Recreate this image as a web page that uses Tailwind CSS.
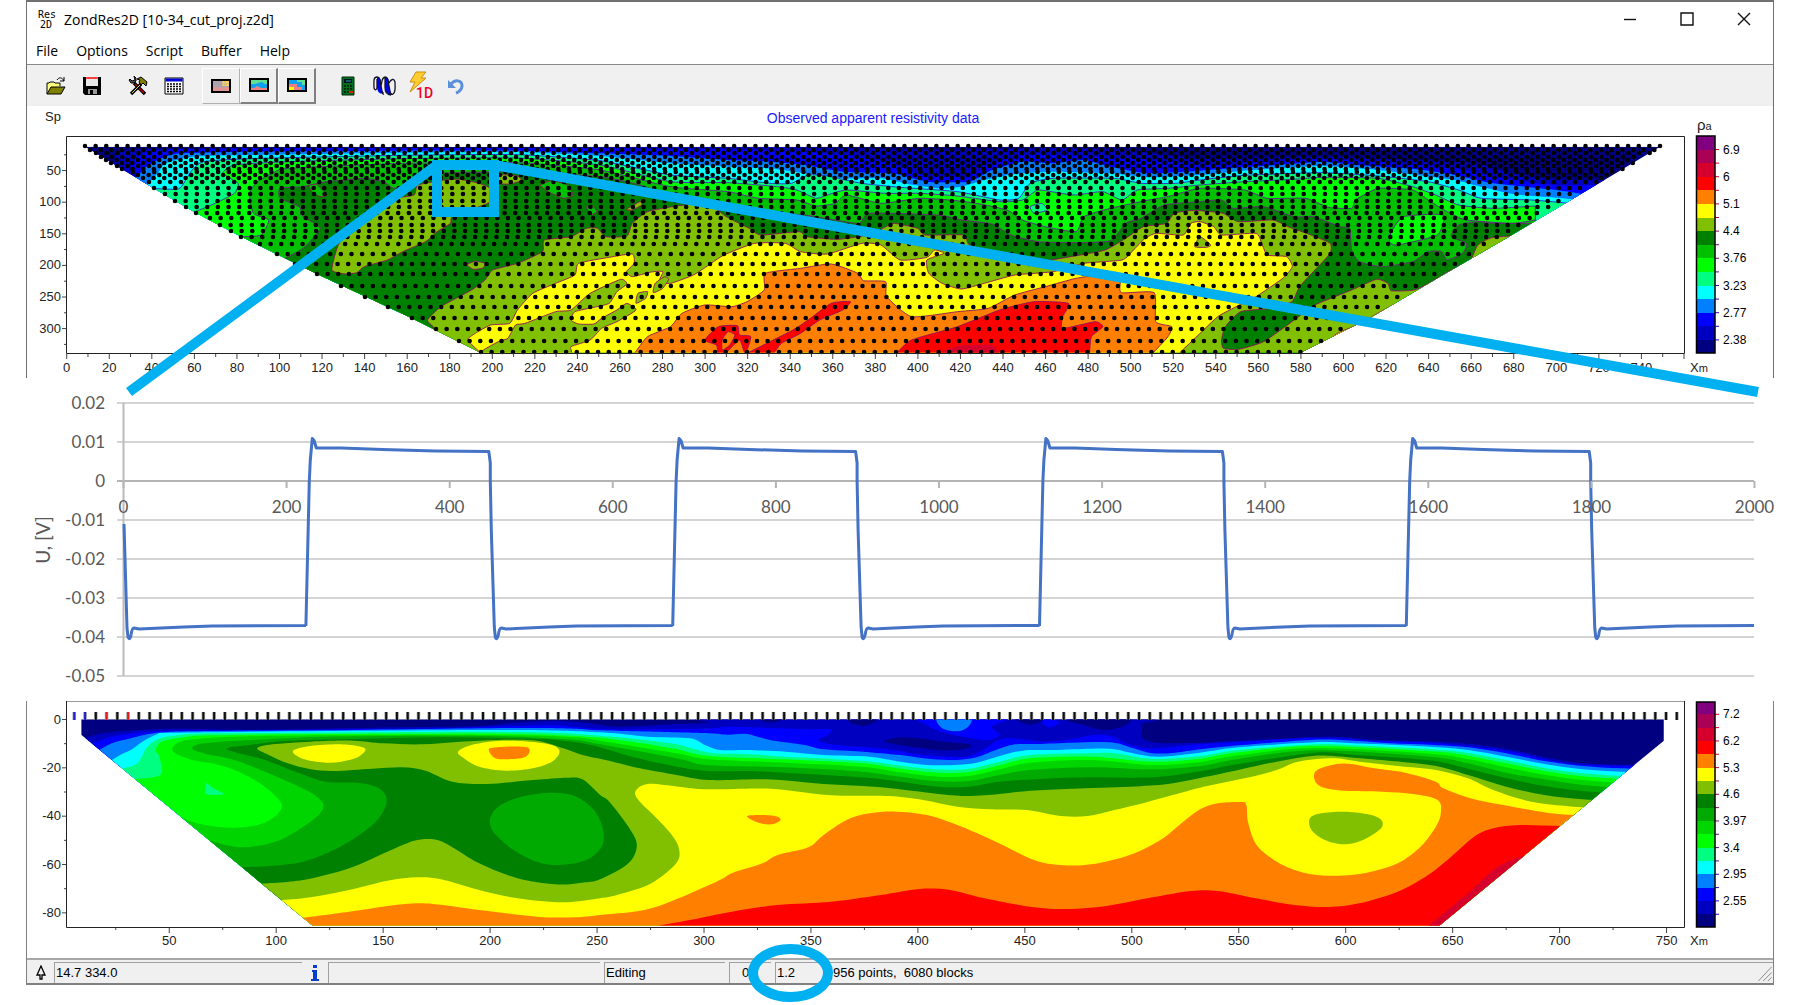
<!DOCTYPE html>
<html lang="en">
<head>
  <meta charset="UTF-8" />
  <meta name="viewport" content="width=device-width, initial-scale=1.0"/>
  <title>ZondRes2D [10-34_cut_proj.z2d]</title>
  <script src="https://cdn.jsdelivr.net/npm/@tailwindcss/browser@4"></script>
</head>
<body class="bg-white text-black">
<div class="relative overflow-hidden pb-5">

  <!-- Window top: title, menu, toolbar, observed data -->
  <div class="mx-[26px] border-x border-t-2 border-[#707070]">
    <header class="flex h-[34px] items-center pl-[11px] font-['Open_Sans',sans-serif]">
      <svg class="h-5 w-5 shrink-0" viewBox="0 0 20 20" font-family="DejaVu Sans Mono, monospace" font-size="10">
        <text x="0" y="9">Res</text><text x="2" y="19">2D</text>
      </svg>
      <h1 class="ml-[6px] text-[14px]">ZondRes2D [10-34_cut_proj.z2d]</h1>
      <div class="ml-auto flex pr-px">
        <button class="flex h-8 w-[57px] items-center justify-center" aria-label="Minimize"><svg class="h-[14px] w-[14px]" viewBox="0 0 14 14" stroke="#111" stroke-width="1.4"><path d="M1 7.5h12"/></svg></button>
        <button class="flex h-8 w-[57px] items-center justify-center" aria-label="Maximize"><svg class="h-[14px] w-[14px]" viewBox="0 0 14 14" fill="none" stroke="#111" stroke-width="1.4"><path d="M1 1h12v12h-12z"/></svg></button>
        <button class="flex h-8 w-[57px] items-center justify-center" aria-label="Close"><svg class="h-[14px] w-[14px]" viewBox="0 0 14 14" stroke="#111" stroke-width="1.4"><path d="M1 1l12 12M13 1l-12 12"/></svg></button>
      </div>
    </header>
    <nav class="flex h-[29px] items-center gap-[18px] border-b border-[#8a8a8a] pl-[9px] font-['Open_Sans',sans-serif] text-[14px]">
      <button>File</button>
      <button>Options</button>
      <button>Script</button>
      <button>Buffer</button>
      <button>Help</button>
    </nav>

    <!-- Toolbar -->
    <div class="flex h-[41px] items-center bg-[#f0f0f0] pl-[11px]">
      <button class="flex h-9 w-9 items-center justify-center" aria-label="Open">
        <svg class="h-5 w-5" viewBox="0 0 20 20"><path d="M1 18V7h2l1-1h4l1 1h5v3" fill="#ffff80" stroke="#000"/><path d="M1 18l4-7h14l-4 7z" fill="#808000" stroke="#000"/><path d="M11 4c2-3 5-3 7 1M18 1v4h-4" fill="none" stroke="#000"/></svg>
      </button>
      <button class="flex h-9 w-9 items-center justify-center" aria-label="Save">
        <svg class="h-5 w-5" viewBox="0 0 20 20"><path d="M1 1h18v18H3l-2-2z" fill="#000"/><path d="M4 2h12v8H4z" fill="#e8e8e8"/><path d="M4 1h12v2H4z" fill="#ff4040"/><path d="M6 13h9v5H6z" fill="#999"/><path d="M8 14h3v4H8z" fill="#000"/></svg>
      </button>
      <span class="w-[10px]"></span>
      <button class="flex h-9 w-9 items-center justify-center" aria-label="Settings">
        <svg class="h-5 w-5" viewBox="0 0 20 20"><path d="M6 7l11 11" stroke="#000" stroke-width="3.4"/><path d="M7 8l9 9" stroke="#c00000" stroke-width="1.4"/><path d="M13 8L3 18" stroke="#000" stroke-width="3.4"/><path d="M12 9l-8 8" stroke="#e0d040"/><path d="M1 4l2 3h3l2-2V2L6 0l1 4-3 1-2-2z" fill="#555" stroke="#000"/><path d="M9 3l4-2 6 5-1 4-3-3-2 2-2-3 1-2z" fill="#808000" stroke="#000"/></svg>
      </button>
      <button class="flex h-9 w-9 items-center justify-center" aria-label="Table">
        <svg class="h-5 w-5" viewBox="0 0 20 20"><path d="M1 2h18v16H1z" fill="#fff" stroke="#000"/><path d="M1.500 2.500h17v3h-17z" fill="#0000d0"/><path d="M3 8h14M3 10.500h14M3 13h14M3 15.500h14" stroke="#000" stroke-width="1.500" stroke-dasharray="2 1"/></svg>
      </button>
      <span class="w-[10px]"></span>
      <button class="flex h-9 w-[38px] items-center justify-center border border-t-white border-l-white border-r-[#b0b0b0] border-b-[#b0b0b0]" aria-label="Cells">
        <svg class="h-[14px] w-5" viewBox="0 0 20 14"><path d="M1 1h18v12H1z" fill="#b0a0b0"/><path d="M11 2h7v5h-7z" fill="#ffd060"/><path d="M2 8h16v4H2z" fill="#f09090"/><path d="M5 2v10M8 2v10M11 2v10M14 2v10M2 5h16M2 8h16" stroke="#aaa" stroke-width=".6"/><path d="M1 1h18v12H1z" fill="none" stroke="#000" stroke-width="2"/></svg>
      </button>
      <button class="flex h-9 w-[38px] items-center justify-center border-t border-l border-r-2 border-b-2 border-t-white border-l-white border-r-[#808080] border-b-[#808080]" aria-label="Section">
        <svg class="h-[14px] w-5" viewBox="0 0 20 14"><path d="M1 1h18v12H1z" fill="#10a0f0"/><path d="M1 1h18v5h-3l-3-2-4 1-3 1H1z" fill="#60e090"/><path d="M1 10h4l3-2 4 2h7v3H1z" fill="#f08080"/><path d="M1 1h18v12H1z" fill="none" stroke="#000" stroke-width="2"/></svg>
      </button>
      <button class="flex h-9 w-[38px] items-center justify-center border-t border-l border-r-2 border-b-2 border-t-white border-l-white border-r-[#808080] border-b-[#808080]" aria-label="Model">
        <svg class="h-[14px] w-5" viewBox="0 0 20 14"><path d="M1 1h18v12H1z" fill="#10a0f0"/><path d="M10 1h9v6h-4V4h-5z" fill="#60e090"/><path d="M1 6h9v3h5v4H1z" fill="#f08080"/><path d="M1 9h6v4H1z" fill="#ff0"/><path d="M1 1h18v12H1z" fill="none" stroke="#000" stroke-width="2"/></svg>
      </button>
      <span class="w-[14px]"></span>
      <button class="flex h-9 w-9 items-center justify-center" aria-label="Calculate">
        <svg class="h-5 w-5" viewBox="0 0 20 20"><path d="M4 1h12v18H4z" fill="#007020" stroke="#002808"/><path d="M6 3h8v4H6z" fill="#012"/><path d="M8 5h5" stroke="#2aa"/><path d="M6 10h9M6 13h9M6 16h5" stroke="#001800" stroke-width="1.500" stroke-dasharray="2 1"/><path d="M11 16h4" stroke="#d02000" stroke-width="2"/></svg>
      </button>
      <button class="flex h-9 w-9 items-center justify-center" aria-label="Inversion">
        <svg class="h-5 w-6" viewBox="0 0 24 20"><path d="M5 1c4 0 4 4 4 8s1 6 3 8c-4 2-7-1-7-7z" fill="#0000f0"/><path d="M13 1c4 0 4 4 4 8s1 7 3 9c-4 2-7-2-7-8z" fill="#0000f0"/><path d="M5 1C1 1 2 6 2 12c1 3 3 2 3-1V3M5 1c4 0 3 5 4 9s1 9 3 8M13 1C9 2 10 8 9 10M13 1c4 0 3 5 4 9s1 10 4 8 2-6 2-12c-1-4-4-3-6 1M13 2v9c0 5 2 8 6 8" fill="none" stroke="#112" stroke-width="1.300"/></svg>
      </button>
      <button class="flex h-9 w-9 items-center justify-center" aria-label="1D inversion">
        <svg class="h-8 w-7" viewBox="0 0 28 32"><path d="M10 2h10l-5 6h5L4 22l5-10H4z" fill="#ffcc30" stroke="#c89010"/><text x="10" y="28" font-family="Roboto, sans-serif" font-size="14" font-weight="500" fill="#f00020">1D</text></svg>
      </button>
      <button class="flex h-9 w-9 items-center justify-center" aria-label="Undo">
        <svg class="h-[18px] w-[18px]" viewBox="0 0 18 18"><path d="M4 7c4-5 11-4 11 2 0 3-3 6-6 7" fill="none" stroke="#5b90dc" stroke-width="3"/><path d="M1 3v8h8z" fill="#5b90dc"/></svg>
      </button>
    </div>

    <svg id="observed" class="block h-auto w-full" viewBox="27 106 1746 272" font-family="Liberation Sans, Arial, sans-serif" font-size="13">
      <defs><clipPath id="obsClip"><path d="M170 80L349 205L461 280L578 350L776 462L1024 595L1204 698H3347L3527 595L3722 463L3890 351L4050 242L4133 185L4286 80z"/></clipPath></defs>
      <text x="45" y="121" fill="#222">Sp</text>
      <text x="873" y="123" text-anchor="middle" font-size="14" fill="#1a1aff">Observed apparent resistivity data</text>
      <g transform="translate(20 120) scale(.38265 .33333)"><g id="obsMap" clip-path="url(#obsClip)"></g></g>
      <g id="obsDots" stroke="#000" stroke-width="4.6" stroke-linecap="round"></g>
      <g id="obsAxes"></g>
    </svg>
  </div>

  <!-- Measured signal -->
  <div class="mx-[26px] px-px">
    <svg id="signal" class="block h-auto w-full overflow-visible" viewBox="27 378 1746 323" font-family="Lato, Carlito, sans-serif" font-size="17" fill="#595959"></svg>
  </div>

  <!-- Window bottom: model section and status bar -->
  <div class="mx-[26px] border-x border-b-2 border-[#808080]">
    <svg id="model" class="block h-auto w-full" viewBox="27 701 1746 257" font-family="Liberation Sans, Arial, sans-serif" font-size="13">
      <defs><clipPath id="modClip"><path d="M160 88V134L765 707H3709L4296 152V88z"/></clipPath></defs>
      <g transform="translate(20 690) scale(.38265 .33333)"><g id="modMap" clip-path="url(#modClip)"></g></g>
      <g id="modAxes"></g>
    </svg>
    <footer class="flex h-[25px] items-stretch border-t-2 border-[#a8a8a8] bg-[#f0f0f0] pt-[2px] font-['Liberation_Sans',Arial,sans-serif] text-[13px] leading-[20px]">
      <span class="flex w-[27px] items-center justify-center"><svg class="h-4 w-3" viewBox="0 0 12 16" fill="none" stroke="#000" stroke-width="1.300"><path d="M6 1L2 10h3v4h2v-4h3z"/></svg></span>
      <span class="w-[248px] border-t border-l border-[#a0a0a0] pl-px">14.7 334.0</span>
      <span class="flex w-[26px] items-center justify-center"><svg class="h-4 w-2" viewBox="0 0 8 16" fill="#0a3cc8"><path d="M2 0h4v3H2zM1 5h5v9h2v2H0v-2h2V7H1z"/></svg></span>
      <span class="w-[272px] border-t border-l border-[#a0a0a0]"></span>
      <span class="ml-1 w-[121px] border-t border-l border-[#a0a0a0] pl-px">Editing</span>
      <span class="ml-1 w-[42px] border-t border-l border-[#a0a0a0] pl-3">0.</span>
      <span class="ml-1 w-[45px] border-t border-l border-[#a0a0a0] pl-px">1.2</span>
      <span class="ml-1 flex-1 border-t border-l border-[#a0a0a0] pl-2 whitespace-pre">956 points,  6080 blocks</span>
      <svg class="h-5 w-4 border-t border-[#a0a0a0]" viewBox="0 0 16 20" stroke="#888"><path d="M1 19L15 4M6 19l9-9M11 19l4-4"/></svg>
    </footer>
  </div>

  <!-- Callout over both panels -->
  <svg class="pointer-events-none absolute top-0 left-0 h-auto w-full" viewBox="0 0 1800 1005" fill="none" stroke="#00b0f0" stroke-width="10">
    <path d="M437 165h57v47h-57zM437 165L129 392M494 165L1758 392"/>
    <ellipse cx="790.500" cy="973" rx="37.500" ry="24"/>
  </svg>
</div>

<script>
  const byId = id => document.getElementById(id);

  // Catmull-Rom path through a flat [x, y, x, y, ...] list
  function curve(flat, closed, soft) {
    const p = [];
    for (let i = 0; i < flat.length; i += 2) p.push([flat[i], flat[i + 1]]);
    const n = p.length;
    const at = i => closed ? p[(i + n) % n] : p[Math.max(0, Math.min(n - 1, i))];
    let d = `M${p[0]}`;
    for (let i = 0; i < (closed ? n : n - 1); i++) {
      const a = at(i - 1), b = at(i), c = at(i + 1), e = at(i + 2);
      d += `C${b[0] + (c[0] - a[0]) * soft} ${b[1] + (c[1] - a[1]) * soft} ${c[0] - (e[0] - b[0]) * soft} ${c[1] - (e[1] - b[1]) * soft} ${c[0]} ${c[1]}`;
    }
    return d;
  }

  // "area" fills everything under the line, "blob" is a closed shape
  function paint(target, layers, soft, stroked) {
    let html = `<rect width="4400" height="740" fill="#000080"/>`;
    for (const [kind, color, pts, line] of layers) {
      let d = curve(pts, kind === "blob", soft);
      d += kind === "area" ? "V760H" + pts[0] + "z" : "z";
      const s = stroked && line !== 0 ? `stroke="${line || "#901060"}" stroke-width="2.5"` : "";
      html += `<path d="${d}" fill="${color}" ${s}/>`;
    }
    byId(target).innerHTML = html;
  }

  paint("obsMap", [
    ["area", "#0000c0", [240,140,250,110,300,88,700,84,1300,84,1900,80,2400,90,2700,84,2900,92,3084,115,3400,110,3600,118,3800,130,3900,160,4000,178,4150,180,4300,180], 0],
    ["area", "#0000ff", [310,172,290,130,330,98,400,88,700,84,1200,84,1568,86,1800,88,2050,95,2250,120,2360,165,2480,168,2540,130,2640,105,2900,115,3084,135,3200,130,3400,118,3600,130,3750,145,3850,170,4000,195,4150,196,4300,192], 0],
    ["area", "#0080ff", [290,190,330,140,370,115,420,100,600,95,1000,92,1300,92,1516,100,1700,108,1850,120,1960,125,2050,135,2150,155,2280,160,2370,185,2480,185,2540,150,2620,125,2700,130,2780,120,2850,140,2950,160,3084,152,3200,142,3400,126,3500,136,3650,148,3750,165,3850,190,4000,208,4100,225], 0],
    ["area", "#00ffff", [320,210,360,160,380,130,450,110,600,105,1000,98,1300,96,1516,108,1700,130,1850,140,1960,145,2050,160,2150,175,2250,175,2320,192,2400,205,2460,200,2520,180,2600,162,2700,155,2850,160,2950,172,3084,165,3200,152,3400,138,3550,150,3650,165,3750,180,3800,195,3900,222,4000,232,4080,240], 0],
    ["area", "#00ff80", [340,205,410,208,425,195,450,150,480,125,600,116,1000,106,1300,104,1516,122,1700,165,1850,175,1960,190,2016,190,2060,165,2110,168,2200,190,2300,202,2450,215,2560,240,2610,235,2640,190,2700,175,2860,175,2930,190,3020,190,3084,180,3200,166,3400,158,3550,168,3680,185,3760,210,3820,235,3950,240,4050,250], "#3020c0"],
    ["area", "#00ff00", [440,284,510,250,560,220,570,190,530,160,560,135,700,125,1000,116,1300,114,1516,135,1700,185,1850,188,1980,200,2030,210,2080,235,2110,225,2160,210,2260,220,2350,220,2450,228,2560,245,2620,240,2660,210,2720,220,2760,225,2830,215,2880,240,2920,210,3000,205,3084,195,3200,185,3330,178,3400,172,3550,175,3640,200,3700,225,3760,255,3850,265,3960,258], "#5020b0"],
    ["blob", "#00ff80", [2640,260,2670,250,2685,270,2650,280], "#5020b0"],
    ["area", "#00c000", [520,342,580,350,630,345,650,300,610,280,600,220,620,185,660,160,700,145,1000,130,1300,128,1516,150,1700,200,1850,215,1930,235,2030,240,2080,258,2130,250,2160,225,2250,250,2350,235,2430,240,2500,250,2580,270,2620,300,2680,320,2760,335,2780,290,2850,265,2950,240,3000,230,3084,205,3200,210,3260,235,3360,235,3420,262,3480,265,3490,240,3550,205,3640,210,3680,240,3730,275,3780,300,3900,310,3960,300], "#602090"],
    ["blob", "#00ff00", [3616,290,3719,285,3704,345,3600,375,3579,365,3584,335], "#602090"],
    ["area", "#008000", [680,422,740,385,785,325,740,290,730,260,680,235,680,205,740,200,800,185,850,180,900,175,950,185,980,205,1060,175,1100,160,1300,155,1516,170,1620,195,1700,225,1850,260,1900,272,2050,285,2190,310,2220,280,2400,285,2460,300,2540,312,2590,345,2660,365,2760,368,2850,362,2890,310,2930,295,2990,255,3084,245,3140,240,3170,265,3250,260,3330,290,3380,290,3450,320,3475,325,3480,390,3500,425,3560,440,3640,425,3680,395,3715,395,3730,420,3770,400,3780,370,3740,350,3760,315,3810,305,3850,310,3960,310], "#702080"],
    ["blob", "#00c000", [755,197,775,193,790,210,803,225,785,230,765,218]],
    ["blob", "#00c000", [1360,195,1390,182,1430,195,1445,225,1420,235,1380,215]],
    ["blob", "#00c000", [1480,262,1496,258,1508,275,1492,284]],
    ["blob", "#80c000", [815,450,850,462,880,458,900,440,960,420,1000,395,1060,365,1090,335,1125,310,1130,290,1200,260,1228,245,1228,205,1200,190,1150,178,1110,180,1040,195,1030,225,980,235,940,265,890,300,850,345,830,380]],
    ["blob", "#80c000", [1250,165,1300,168,1310,182,1280,192,1250,190]],
    ["blob", "#80c000", [1168,434,1190,424,1215,430,1210,444,1185,448]],
    ["blob", "#80c000", [1585,268,1620,245,1625,255,1600,270]],
    ["area", "#80c000", [1080,620,1065,600,1100,560,1180,510,1215,480,1235,450,1300,430,1365,395,1370,360,1440,350,1480,325,1510,325,1530,350,1586,348,1600,310,1640,275,1716,258,1796,250,1846,290,1906,325,1936,345,2036,335,2056,350,2136,358,2216,345,2260,322,2285,310,2346,325,2366,345,2466,345,2481,375,2556,405,2656,425,2746,410,2836,390,2896,350,2936,320,2996,310,3016,280,3056,272,3084,272,3144,280,3184,305,3274,300,3314,320,3374,345,3424,370,3424,400,3384,450,3344,500,3324,545,3270,565,3190,575,3150,620,3140,660,3145,685,3184,688,3250,665,3330,600,3384,555,3480,510,3545,478,3575,490,3584,512,3650,508,3740,450,3790,420,3810,375,3850,352,3950,345]],
    ["area", "#ffff00", [1205,700,1170,660,1190,640,1230,615,1280,610,1300,570,1340,520,1400,490,1450,465,1460,430,1540,412,1600,402,1605,430,1585,455,1600,470,1650,456,1680,455,1670,485,1700,490,1760,465,1800,435,1840,405,1920,370,2000,370,2040,395,2110,402,2200,370,2250,375,2300,420,2370,412,2390,390,2415,400,2370,420,2375,460,2410,490,2460,507,2520,490,2600,465,2700,455,2780,430,2880,420,2910,390,2940,355,2970,340,3040,345,3060,310,3084,305,3120,320,3140,345,3230,340,3245,370,3260,405,3310,410,3325,440,3300,475,3230,530,3170,565,3130,590,3084,640,3031,698]],
    ["blob", "#80c000", [1204,704,1250,665,1275,655,1295,615,1320,610,1400,575,1440,570,1490,520,1570,478,1586,492,1560,515,1540,550,1500,562,1450,575,1440,600,1460,612,1500,612,1520,595,1560,570,1586,550,1610,570,1560,605,1520,625,1490,660,1440,680,1430,704]],
    ["blob", "#80c000", [1655,518,1660,490,1685,470,1695,478,1680,505]],
    ["blob", "#80c000", [1610,550,1615,520,1640,515,1635,535]],
    ["blob", "#80c000", [3070,380,3084,350,3112,375,3100,382]],
    ["blob", "#ffff00", [3434,650,3500,612,3600,550,3700,560,3560,700]],
    ["area", "#ff8000", [1606,700,1640,650,1700,620,1730,580,1790,555,1860,560,1900,545,1945,510,1948,460,2040,445,2120,432,2190,460,2204,482,2262,485,2265,530,2330,590,2450,575,2530,565,2600,525,2680,500,2760,475,2830,465,2874,480,2878,518,2964,518,2968,605,3010,620,3000,650,2960,700]],
    ["area", "#ff0000", [2290,700,2330,660,2450,620,2560,570,2650,545,2740,550,2725,590,2725,625,2810,605,2830,620,2800,650,2795,700]],
    ["area", "#d5002b", [2400,700,2450,678,2540,675,2560,700], 0],
    ["area", "#ff0000", [1900,700,1960,665,2020,630,2060,600,2120,550,2170,545,2150,570,2090,600,2040,640,1990,670,1970,700]],
    ["blob", "#ff0000", [1790,660,1825,620,1875,617,1880,645,1910,650,1895,700,1880,660,1840,704,1825,700,1820,675]],
    ["blob", "#ff8000", [1835,660,1850,635,1868,645,1855,675,1835,690]]
  ], .09, true);

  paint("modMap", [
    ["area", "#0000c0", [160,150,205,132,280,122,400,116,600,119,800,116,1000,112,1200,108,1300,98,1400,92,1480,98,1568,110,1716,102,1800,98,1850,84,2880,84,2930,105,2931,140,2970,158,3084,158,3184,152,3284,147,3384,141,3450,141,3550,150,3700,155,3800,163,3900,180,4000,205,4084,220,4220,225,4300,225]],
    ["area", "#0000ff", [180,165,240,140,330,126,500,121,800,119,1100,115,1300,108,1400,106,1516,117,1700,118,1800,115,1856,110,1986,115,2056,118,2120,118,2110,135,2086,152,2136,165,2216,172,2296,182,2366,195,2466,200,2516,180,2556,150,2596,145,2676,155,2746,148,2806,135,2850,138,2890,160,2930,172,2970,175,3084,162,3184,156,3384,143,3550,153,3700,159,3884,182,3984,208,4084,224,4300,229]],
    ["blob", "#000080", [2260,155,2300,142,2360,146,2420,156,2480,162,2476,175,2420,182,2340,172]],
    ["blob", "#000080", [2165,92,2230,84,2236,96,2200,108]],
    ["blob", "#000080", [2736,90,2800,84,2900,84,2880,110,2830,120,2780,105]],
    ["blob", "#000080", [1930,84,1960,98,2000,84]],
    ["blob", "#000080", [2600,84,2640,104,2680,84]],
    ["blob", "#0000ff", [2360,84,2370,105,2420,130,2520,150,2560,135,2540,110,2570,84]],
    ["blob", "#0000ff", [2670,95,2690,84,2715,98,2690,112]],
    ["area", "#0080ff", [200,185,240,160,290,145,350,130,450,124,800,121,1300,114,1450,116,1516,121,1716,127,1800,130,1850,134,1900,132,1960,150,2050,165,2100,178,2200,185,2300,195,2380,207,2450,210,2500,202,2550,180,2600,163,2660,162,2750,158,2850,157,2910,175,2960,190,3020,188,3084,178,3184,166,3284,157,3384,149,3484,152,3584,160,3684,164,3784,172,3884,190,3984,213,4084,228,4184,235,4300,235]],
    ["blob", "#0080ff", [2400,84,2405,110,2430,122,2460,122,2482,105,2480,84]],
    ["area", "#00ffff", [240,210,270,190,290,180,320,155,360,132,400,128,800,123,1300,120,1516,127,1640,140,1750,145,1790,165,1830,180,1900,180,2000,185,2100,195,2220,200,2300,215,2370,225,2440,225,2500,218,2560,198,2620,182,2700,180,2800,176,2860,178,2920,193,2980,200,3084,188,3184,172,3384,157,3484,160,3684,170,3784,180,3884,200,3984,222,4084,238,4184,245,4300,247]],
    ["area", "#00ff80", [250,240,300,225,318,200,330,175,355,150,400,137,500,130,800,128,1300,126,1516,137,1700,160,1800,188,1900,192,2000,200,2200,212,2300,227,2400,238,2480,236,2560,215,2640,195,2800,190,2860,190,2960,207,3084,198,3184,180,3384,163,3484,166,3684,177,3784,189,3884,210,3984,234,4084,250,4184,258,4300,262]],
    ["area", "#00ff00", [290,268,366,255,364,200,355,180,370,155,420,143,500,136,800,132,1100,131,1300,132,1516,143,1700,174,1800,198,2000,208,2200,220,2300,236,2400,248,2480,246,2560,226,2640,205,2800,200,2960,215,3084,206,3184,187,3384,168,3684,184,3784,197,3884,220,3984,243,4084,259,4200,268,4300,272]],
    ["area", "#00d500", [400,370,450,395,500,408,560,413,620,405,660,385,685,348,660,310,620,275,560,240,500,220,450,210,400,185,410,160,450,148,560,140,800,136,1100,134,1300,136,1450,142,1516,152,1716,190,1800,208,2000,218,2200,230,2300,247,2400,260,2480,258,2560,238,2640,218,2800,210,2960,225,3084,216,3184,196,3384,174,3684,191,3784,207,3884,232,3984,254,4084,270,4200,280]],
    ["blob", "#00ff80", [487,280,505,295,532,312,487,312]],
    ["area", "#00aa00", [490,450,560,470,620,468,680,450,740,410,780,375,793,345,770,315,720,285,640,245,560,210,480,190,450,175,480,160,600,150,800,140,1100,137,1300,140,1450,150,1516,163,1716,205,1800,226,2000,232,2200,245,2300,260,2400,274,2480,273,2560,255,2640,240,2800,232,2960,238,3084,228,3184,207,3384,181,3684,200,3784,220,3884,248,3984,268,4084,285,4200,295]],
    ["area", "#008000", [565,532,650,528,740,515,820,480,880,440,930,395,955,350,955,315,930,290,880,278,800,275,720,245,640,210,540,178,600,165,700,152,900,146,1100,142,1300,145,1400,150,1480,162,1540,180,1600,200,1716,230,1800,243,1900,243,2000,248,2200,262,2300,275,2400,290,2480,290,2560,275,2700,265,2800,262,2960,262,3084,244,3184,222,3384,188,3484,194,3684,211,3784,236,3884,264,3984,288,4084,303,4200,312]],
    ["blob", "#00aa00", [1228,390,1250,350,1310,320,1390,308,1450,318,1500,360,1524,420,1520,470,1480,510,1410,525,1350,515,1290,480,1240,430]],
    ["area", "#80c000", [620,582,740,570,860,535,960,485,1030,452,1080,448,1120,465,1200,520,1300,565,1400,583,1470,578,1516,568,1590,520,1612,465,1590,410,1540,335,1516,315,1470,268,1430,263,1340,270,1220,282,1130,275,1060,242,1000,232,920,236,820,243,760,238,700,220,650,195,620,175,660,163,760,155,870,152,950,160,1050,163,1150,155,1250,150,1350,152,1420,175,1470,195,1530,210,1620,235,1716,255,1800,270,1950,268,2100,282,2250,292,2400,312,2480,318,2560,312,2640,302,2750,296,2900,290,3000,282,3084,264,3184,240,3284,215,3384,197,3484,203,3684,225,3784,255,3884,290,3984,315,4084,328,4200,335]],
    ["blob", "#ffff00", [716,180,760,168,830,163,880,168,903,178,885,200,840,215,800,218,750,210,720,195]],
    ["blob", "#ffff00", [1145,185,1180,165,1250,153,1330,155,1390,165,1410,185,1390,215,1340,235,1270,242,1200,230,1160,205]],
    ["blob", "#ff8000", [1228,175,1270,170,1325,172,1330,190,1310,205,1250,207,1230,192]],
    ["area", "#ffff00", [670,632,760,622,860,600,960,572,1040,562,1100,568,1200,600,1300,625,1420,637,1516,625,1570,612,1650,580,1715,520,1722,475,1700,430,1660,380,1620,335,1608,305,1640,282,1720,290,1800,298,1960,296,2120,316,2270,318,2360,330,2450,350,2540,358,2630,360,2720,378,2790,378,2860,360,2940,338,3030,310,3084,293,3200,265,3284,240,3340,215,3430,205,3500,215,3600,228,3700,240,3784,265,3850,300,3950,335,4084,352,4200,356]],
    ["area", "#ff8000", [735,684,860,665,1000,643,1080,642,1200,660,1350,680,1450,682,1516,675,1650,655,1820,575,1860,550,1940,520,1980,495,2060,472,2100,435,2160,390,2220,370,2290,365,2370,375,2450,405,2550,455,2650,510,2720,525,2800,523,2900,495,2980,450,3040,395,3084,358,3130,340,3190,336,3205,345,3210,400,3235,470,3300,525,3370,552,3440,557,3520,548,3600,520,3660,470,3700,410,3713,370,3705,330,3640,312,3560,305,3460,302,3400,290,3382,265,3390,240,3440,222,3480,222,3540,235,3620,248,3700,275,3720,295,3800,328,3900,350,3990,368,4070,375,4200,380]],
    ["blob", "#80c000", [3371,385,3400,370,3460,365,3520,372,3556,388,3557,415,3510,450,3460,463,3410,450,3375,420]],
    ["blob", "#ff8000", [1900,380,1925,375,1970,377,1988,388,1970,402,1935,400]],
    ["area", "#ff0000", [1660,709,1750,690,1860,665,1980,645,2120,635,2250,615,2350,597,2430,600,2520,625,2650,652,2740,657,2840,648,2960,622,3060,603,3130,603,3230,625,3330,645,3420,651,3500,640,3600,605,3680,555,3740,500,3800,440,3850,415,3920,405,4030,408,4200,410]],
    ["area", "#d5002b", [3679,709,3784,610,3854,537,3924,499,3980,490]]
  ], .16, false);

  // Measurement points: [y, first x] for every pseudo-depth
  const dotRows = [[146,85],[150,90],[153,96],[157,101],[160,106],[163,111],[166,117],[169,122],[172,133],[175,138],[178,143],[182,149],
    [188,154],[194,165],[201,175],[207,186],[213,196],[218,210],[225,220],[231,231],[237,241],[244,260],[254,277],[264,295],[274,317],
    [286,341],[297,365],[307,388],[318,412],[329,436],[341,459],[352,481]];
  byId("obsDots").innerHTML = dotRows.map(([y, x]) =>
    `<path d="M${x} ${y}H${1662 - (y - 146) * 1.715}" stroke-dasharray="0 10.642"/>`).join("");

  const text = (x, y, s, anchor) => `<text x="${x}" y="${y}" text-anchor="${anchor || "middle"}" fill="#222">${s}</text>`;
  const tick = (d, color) => `<path d="${d}" stroke="${color || "#444"}" fill="none"/>`;

  function colorBar(colors, top, bottom, firstEnd, step, labels) {
    let s = "";
    colors.forEach((c, i) => {
      const y1 = i ? firstEnd + (i - 1) * step : top;
      const y2 = i === colors.length - 1 ? bottom : firstEnd + i * step;
      s += `<path d="M1697 ${y1}H1715V${y2}H1697z" fill="${c}" shape-rendering="crispEdges"/>`;
      if (i < colors.length - 1) {
        const t = i / colors.length;
        s += tick(`M1715 ${y2}h4`, `rgb(${Math.round(240 * (1 - t))} 0 ${Math.round(255 * t)})`);
      }
    });
    s += `<path d="M1696.500 ${top}H1715V${bottom}H1696.500z" fill="none" stroke="#000" stroke-width="1.500"/>`;
    labels.forEach((l, i) => s += `<text x="1723" y="${firstEnd + i * 2 * step + 4}" font-size="12">${l}</text>`);
    return s;
  }

  // Axes of the observed data
  let axes = "";
  for (let v = 0; v <= 760; v += 10) {
    const x = 66.7 + v * 2.128;
    axes += tick(`M${x} 354v${v % 20 ? 3 : 5}`);
    if (v % 20 === 0 && v < 760) axes += text(x, 372, v);
  }
  for (let v = 25; v <= 325; v += 25) {
    const y = 139 + v * .632;
    axes += tick(`M67 ${y}h${v % 50 ? -3 : -5}`);
    if (v % 50 === 0) axes += text(61, y + 4, v, "end");
  }
  axes += `<path d="M66.500 136.500H1684.500V353.500H66.500z" fill="none" stroke="#222"/>`;
  axes += `<text x="1690" y="372" fill="#222">X<tspan font-size="11">m</tspan></text>`;
  axes += `<text x="1697" y="130" font-size="15" fill="#222">ρ<tspan font-size="11">a</tspan></text>`;
  axes += colorBar(["#800080","#aa0055","#d5002b","#ff0000","#ff8000","#ffff00","#80c000","#008000","#00c000","#00ff00","#00ff80","#00ffff","#0080ff","#0000ff","#0000c0","#000080"],
    136, 353, 149.5, 13.6, ["6.9","6","5.1","4.4","3.76","3.23","2.77","2.38"]);
  byId("obsAxes").innerHTML = axes;

  // Axes and electrodes of the model
  axes = "";
  for (let v = 25; v <= 750; v += 25) {
    const x = 62.3 + v * 2.139;
    axes += tick(`M${x} 927v${v % 50 ? 3 : 6}`);
    if (v % 50 === 0) axes += text(x, 945, v);
  }
  for (let v = 0; v <= 80; v += 10) {
    const y = 719.5 + v * 2.417;
    axes += tick(`M67 ${y}h${v % 20 ? -3 : -5}`);
    if (v % 20 === 0) axes += text(61, y + 4, v ? -v : 0, "end");
  }
  for (let i = 0; i < 150; i++) {
    const c = i < 2 ? "#2020d0" : i === 3 || i === 5 ? "#e02020" : "#111";
    axes += `<path d="M${74.3 + i * 10.755} 712v8" stroke="#999" stroke-width="3.500"/><path d="M${74.3 + i * 10.755} 712v8" stroke="${c}" stroke-width="2"/>`;
  }
  axes += `<path d="M66.500 701V927.500H1684.500V701" fill="none" stroke="#222"/><path d="M67 701.500H1684" stroke="#999"/>`;
  axes += `<text x="1690" y="945" fill="#222">X<tspan font-size="11">m</tspan></text>`;
  axes += colorBar(["#800080","#aa0055","#d5002b","#ff0000","#ff8000","#ffff00","#80c000","#008000","#00aa00","#00d500","#00ff00","#00ff80","#00ffff","#0080ff","#0000ff","#0000c0","#000080"],
    702, 927, 714.3, 13.33, ["7.2","6.2","5.3","4.6","3.97","3.4","2.95","2.55"]);
  byId("modAxes").innerHTML = axes;

  // Signal chart
  let sig = "";
  for (let i = 0; i <= 7; i++) {
    const y = 403 + i * 39;
    sig += `<path d="M117 ${y}H1754" stroke="${i === 2 ? "#b4b4b4" : "#d4d4d4"}" stroke-width="2"/>`;
    sig += `<text x="105" y="${y + 6}" text-anchor="end">${["0.02","0.01","0","-0.01","-0.02","-0.03","-0.04","-0.05"][i]}</text>`;
  }
  sig += `<path d="M123.500 403V676" stroke="#bbb" stroke-width="2"/>`;
  let wave = "M124 524L127 628L128 637Q130 641 131 635Q132 628 134 628L139 629L150 628.500L184 627L212 626L306 625.500";
  for (let k = 0; k < 4; k++) {
    const x = 309.3 + k * 366.8;
    wave += `M${x - 3.4} 626L${x} 481L${x + 1} 460L${x + 3} 438.5L${x + 5} 441L${x + 7} 448H${x + 32}L${x + 73} 449.500L${x + 126} 451L${x + 179.500} 451.500L${x + 181} 463V481L${x + 182} 530L${x + 185} 627L${x + 186} 637Q${x + 187.500} 641 ${x + 189} 635Q${x + 190} 628 ${x + 192} 628L${x + 197} 629L${x + 207} 628.500L${x + 240} 627L${x + 267} 626L${k < 3 ? x + 363.4 : 1754} 625.500`;
  }
  sig += `<path d="${wave}" fill="none" stroke="#4472c4" stroke-width="3" stroke-linejoin="round"/>`;
  for (let v = 0; v <= 2000; v += 200) {
    const x = 123.5 + v * .8155;
    sig += `<path d="M${x} 481v7" stroke="#b4b4b4" stroke-width="2"/><text x="${x}" y="513" text-anchor="middle">${v}</text>`;
  }
  sig += `<text transform="translate(50 540) rotate(-90)" text-anchor="middle" font-size="19">U, [V]</text>`;
  byId("signal").innerHTML = sig;
</script>
</body>
</html>
